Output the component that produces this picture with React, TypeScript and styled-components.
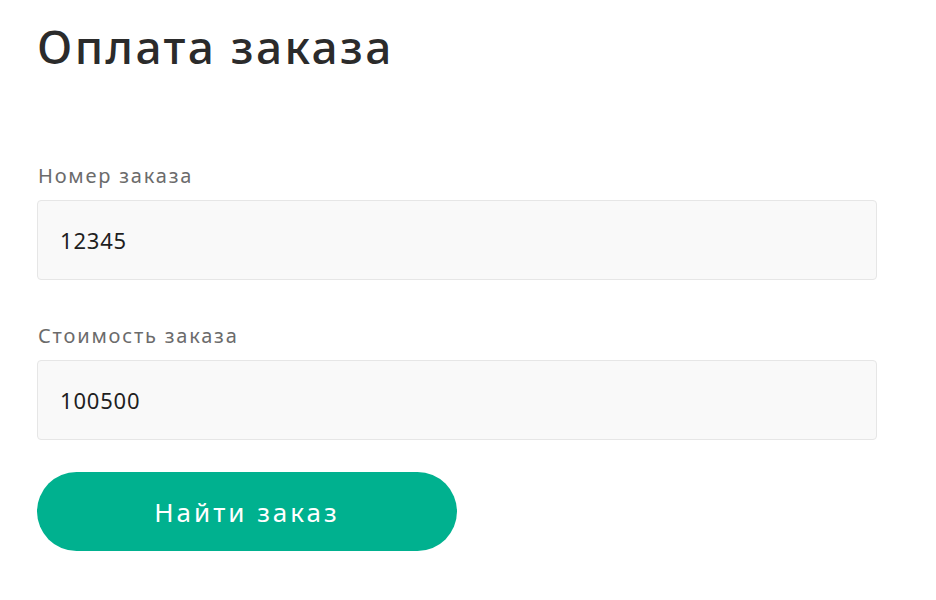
import React from "react";
import styled, { createGlobalStyle } from "styled-components";

const Global = createGlobalStyle`
  html, body { margin: 0; padding: 0; background: #ffffff; }
  body { font-family: "Noto Sans", "Open Sans", sans-serif; }
`;

const Page = styled.div`
  padding: 14px 59px 0 37px;
  display: flex;
  flex-direction: column;
`;

const Title = styled.h1`
  margin: 0 0 86px 0;
  font-size: 46px;
  line-height: 64px;
  font-weight: 500;
  color: #2b2b2b;
  letter-spacing: 2.4px;
`;

const Field = styled.div<{ $gap: number }>`
  display: flex;
  flex-direction: column;
  margin-bottom: ${(p) => p.$gap}px;
`;

const Label = styled.label`
  font-size: 20px;
  line-height: 24px;
  color: #6b6b6b;
  margin: 0 1px 12px;
  letter-spacing: 1.8px;
`;

const Input = styled.input`
  box-sizing: border-box;
  width: 840px;
  height: 80px;
  border: 1px solid #e6e6e6;
  border-radius: 4px;
  background: #f9f9f9;
  padding: 0 22px;
  font-family: inherit;
  font-size: 22px;
  letter-spacing: 0.8px;
  color: #1f1f1f;
  outline: none;
`;

const Button = styled.button`
  width: 420px;
  height: 79px;
  border: none;
  border-radius: 40px;
  background: #00b18f;
  color: #ffffff;
  font-family: inherit;
  font-size: 26px;
  letter-spacing: 3px;
  cursor: pointer;
`;

export default function App() {
  return (
    <>
      <Global />
      <Page>
        <Title>Оплата заказа</Title>
        <Field $gap={44}>
          <Label>Номер заказа</Label>
          <Input defaultValue="12345" />
        </Field>
        <Field $gap={32}>
          <Label>Стоимость заказа</Label>
          <Input defaultValue="100500" />
        </Field>
        <Button>Найти заказ</Button>
      </Page>
    </>
  );
}
